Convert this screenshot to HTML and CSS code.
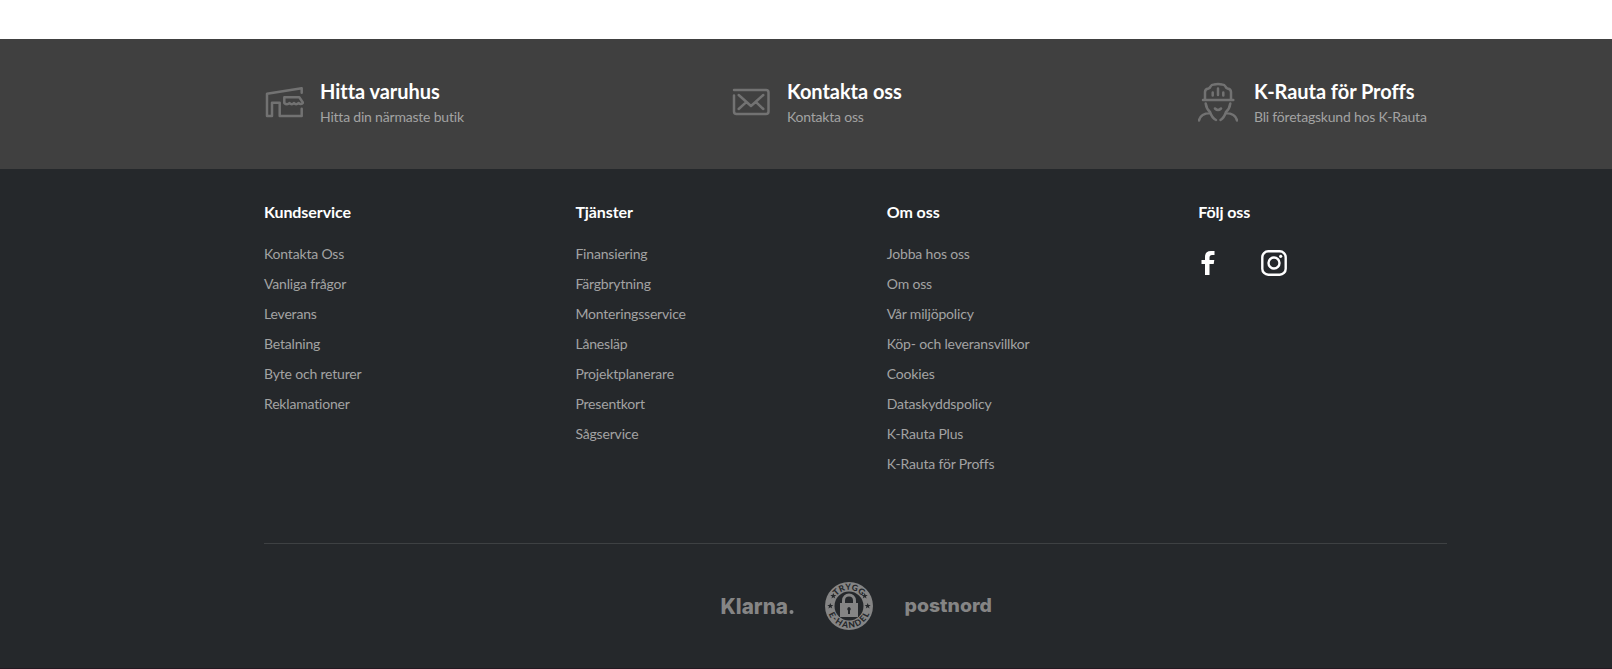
FILE: index.html
```html
<!DOCTYPE html>
<html lang="sv">
<head>
<meta charset="utf-8">
<title>K-Rauta</title>
<link rel="stylesheet" href="styles.css">
</head>
<body>
<footer class="footer">
  <section class="services">
    <div class="container services-row">
      <a class="service">
        <svg class="service-icon" viewBox="0 0 40 44"><path d="M37.700 14.700V10.300L3 15.700V38H8V24.700H15.700V38H37.700V30.700M20.300 19.300H35.300L39 24.700C38 26.500 36 26.500 34.500 25C33 26.600 31.200 26.600 30 25C28.700 26.600 26.800 26.600 25.500 25C24 26.600 22 26.600 20.300 25Z"/></svg>
        <span class="service-text"><b class="service-title">Hitta varuhus</b><span class="service-sub">Hitta din närmaste butik</span></span>
      </a>
      <a class="service">
        <svg class="service-icon" viewBox="0 0 40 44"><path d="M3 12H35Q37.500 12 37.500 14.500V33.500Q37.500 36 35 36H5.500Q3 36 3 33.500V17.500M7.700 17L20 28L32.300 17M7.700 31L15 24.300M25.300 24.300L32.300 31"/></svg>
        <span class="service-text"><b class="service-title">Kontakta oss</b><span class="service-sub">Kontakta oss</span></span>
      </a>
      <a class="service">
        <svg class="service-icon" viewBox="0 0 40 44"><path d="M5 22H35.300M7 21.500V14Q7 11 10.500 10.500Q12 10 12.500 8.500Q13.500 6.500 16 6.500Q20 5.300 24 6.500Q26.500 6.500 27.500 8.500Q28 10 29.500 10.500Q33 11 33 14V21.500M14.700 14.500V17.500M20 10.500V17M25.300 14.500V17.500M7.700 25.500Q8.500 31 12 34Q14 40 18 42M32.300 25.500Q31.500 31 28 34Q26 40 22.500 42M17 30.500Q20 33.500 23 30.500M1 42.500Q2.500 35.500 12 35M39 42.500Q37.500 35.500 28 35"/></svg>
        <span class="service-text"><b class="service-title">K-Rauta för Proffs</b><span class="service-sub">Bli företagskund hos K-Rauta</span></span>
      </a>
    </div>
  </section>
  <section class="container links">
    <div class="col"><h3>Kundservice</h3><a>Kontakta Oss</a><a>Vanliga frågor</a><a>Leverans</a><a>Betalning</a><a>Byte och returer</a><a>Reklamationer</a></div>
    <div class="col"><h3>Tjänster</h3><a>Finansiering</a><a>Färgbrytning</a><a>Monteringsservice</a><a>Lånesläp</a><a>Projektplanerare</a><a>Presentkort</a><a>Sågservice</a></div>
    <div class="col"><h3>Om oss</h3><a>Jobba hos oss</a><a>Om oss</a><a>Vår miljöpolicy</a><a>Köp- och leveransvillkor</a><a>Cookies</a><a>Dataskyddspolicy</a><a>K-Rauta Plus</a><a>K-Rauta för Proffs</a></div>
    <div class="col"><h3>Följ oss</h3>
      <div class="social">
        <svg class="facebook" viewBox="0 0 14 24"><path d="M4 24V13H0.500V9H4V6Q4 0 10 0H13.500V4H11Q8.500 4 8.500 6.500V9H13.300L12.700 13H8.500V24Z"/></svg>
        <svg class="instagram" viewBox="0 0 26 26"><rect x="1.300" y="1.300" width="23.400" height="23.400" rx="6"/><circle cx="13" cy="13" r="5.500"/><circle class="dot" cx="19.700" cy="6.300" r="1.600"/></svg>
      </div>
    </div>
  </section>
  <section class="container partners">
    <svg class="klarna" viewBox="0 0 74 32"><text x="-.5" y="24" textLength="67.500" lengthAdjust="spacingAndGlyphs">Klarna</text><circle cx="70.500" cy="22" r="2"/></svg>
    <svg class="trygg" viewBox="0 0 48 48">
      <defs><path id="arc-top" d="M7.900 24A16.100 16.100 0 0 1 40.100 24"/><path id="arc-bottom" d="M2.200 24A21.800 21.800 0 0 0 45.800 24"/>
      <path id="star" d="M0-3L.800-.900 3-.900 1.200.500 1.900 2.600 0 1.300-1.900 2.600-1.200.500-3-.900-.800-.900Z"/></defs>
      <circle class="seal" cx="24" cy="24" r="24"/><circle class="hole" cx="24" cy="24" r="14.500"/>
      <text><textPath href="#arc-top" startOffset="50%" textLength="29">TRYGG</textPath></text>
      <text><textPath href="#arc-bottom" startOffset="50%" textLength="52">E-HANDEL</textPath></text>
      <g class="stars"><use href="#star" x="5.300" y="24"/><use href="#star" x="42.700" y="24"/><use href="#star" x="8.300" y="14"/><use href="#star" x="39.700" y="14"/></g>
      <path class="shackle" d="M18.500 22V18.500A5.500 5.500 0 0 1 29.500 18.500V22"/><rect class="seal" x="15" y="21" width="18" height="14"/>
      <path class="hole" d="M24 25A2 2 0 0 1 25 28.500V32H23V28.500A2 2 0 0 1 24 25"/>
    </svg>
    <svg class="postnord" viewBox="0 0 87 32"><text x="-.5" y="21.500" textLength="87.500" lengthAdjust="spacingAndGlyphs">postnord</text></svg>
  </section>
</footer>
</body>
</html>
```
FILE: styles.css
```css
* { box-sizing: border-box; }
body { margin: 0; background: #fff; font-family: Lato, "Noto Sans", sans-serif; font-size: 14px; font-variant-ligatures: none; }
.footer { margin-top: 39px; height: 630px; background: #25282b; border-bottom: 1px solid #231a22; overflow: hidden; }
.container { width: 1183px; margin-left: 264px; }
.services { height: 130px; background: #404040; }
.services-row { display: grid; grid-template-columns: 467px 467px 249px; }
.service { display: flex; gap: 16px; padding-top: 39px; white-space: nowrap; }
.service-icon { width: 40px; height: 44px; fill: none; stroke: #727272; stroke-width: 2.500; stroke-linecap: round; stroke-linejoin: round; }
.service-text { display: flex; flex-direction: column; }
.service-title { color: #fff; font-size: 20px; line-height: 26px; letter-spacing: -.05px; }
.service-sub { color: #a3a3a3; line-height: 26px; letter-spacing: -.2px; }
.links { height: 375px; display: grid; grid-template-columns: repeat(4, 311.400px); padding-top: 33px; border-bottom: 1px solid #3e4143; }
.col { display: flex; flex-direction: column; align-items: flex-start; }
.col h3 { margin: 0 0 17px; color: #fff; font-size: 16px; line-height: 20px; letter-spacing: -.08px; }
.col a { color: #a3a3a3; line-height: 30px; letter-spacing: -.18px; white-space: nowrap; }
.social { display: flex; gap: 46px; padding-top: 11px; padding-left: 3px; }
.facebook { width: 14px; height: 26px; fill: #fff; }
.instagram { width: 26px; height: 26px; fill: none; stroke: #fff; stroke-width: 2.400; }
.dot { fill: #fff; stroke: none; }
.partners { display: flex; align-items: center; padding: 38px 0 0 457px; fill: #858585; font-family: Inter, sans-serif; font-weight: 800; }
.klarna { width: 74px; height: 32px; font-size: 22px; overflow: visible; }
.trygg { width: 48px; height: 48px; margin: 0 32px 0 30px; overflow: visible; }
.trygg text { fill: #25282b; font-family: Lato, sans-serif; font-size: 8.500px; font-weight: 900; text-anchor: middle; }
.hole, .stars { fill: #25282b; }
.shackle { fill: none; stroke: #858585; stroke-width: 3; }
.postnord { width: 87px; height: 32px; font-size: 18.500px; overflow: visible; }
```
